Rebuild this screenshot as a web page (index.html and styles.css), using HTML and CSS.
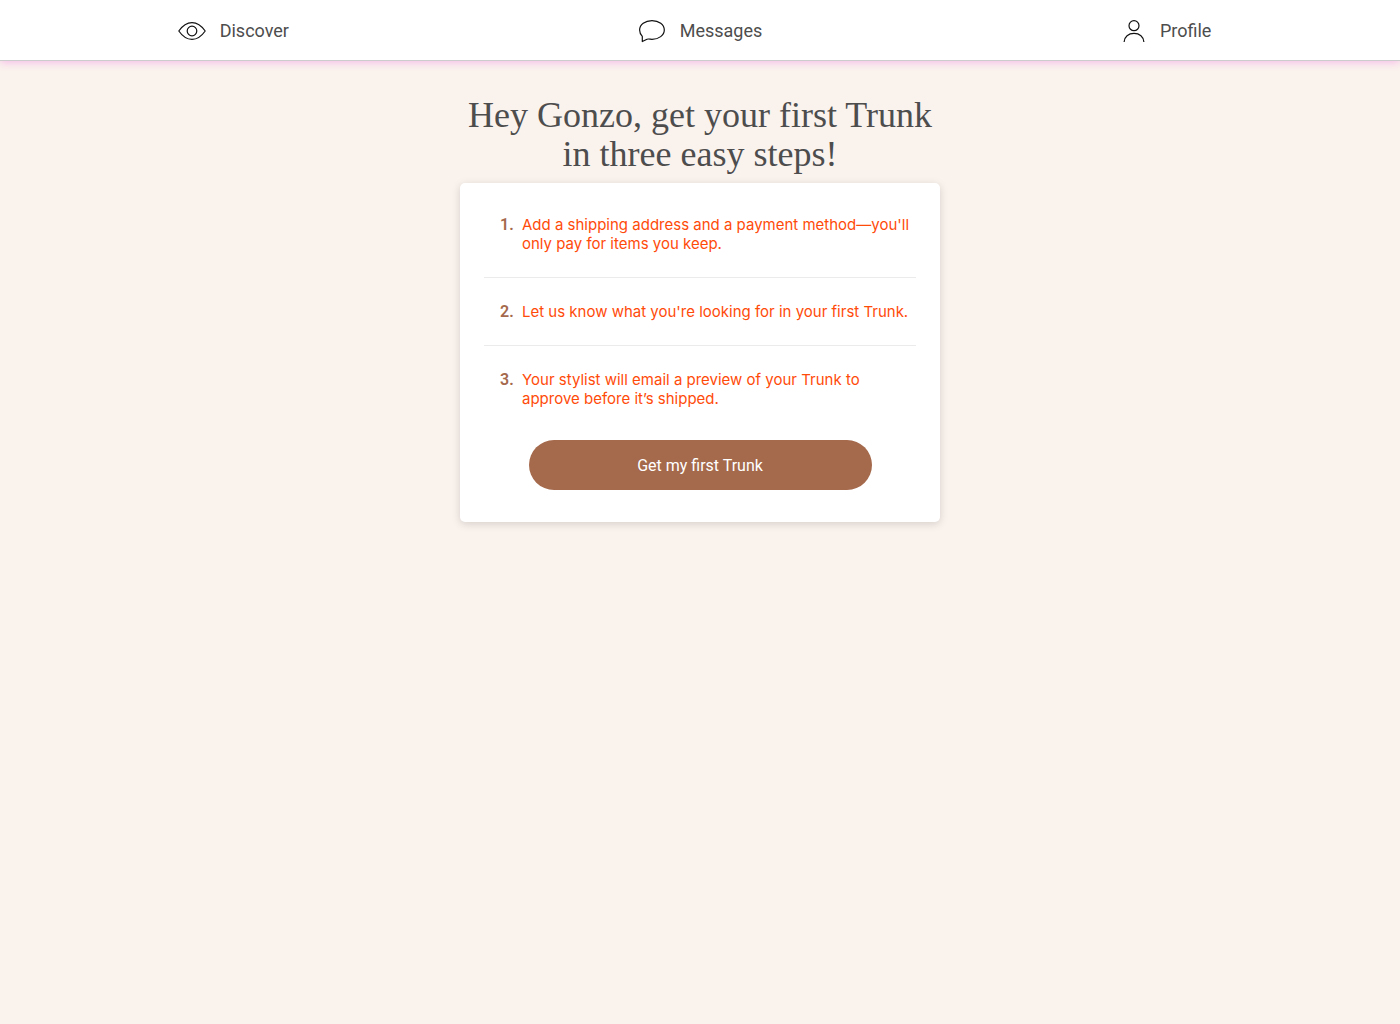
FILE: index.html
```html
<!DOCTYPE html>
<html lang="en">
<head>
  <meta charset="utf-8">
  <meta name="viewport" content="width=device-width, initial-scale=1">
  <title>Get your first Trunk</title>
  <link rel="stylesheet" href="styles.css">
</head>
<body>
  <header class="site-header">
    <nav class="nav" aria-label="Main">
      <a class="nav-link" href="#discover">
        <svg class="nav-icon" width="28" height="24" viewBox="0 0 28 24" aria-hidden="true">
          <path d="M0.8 12C4.3 7 8.6 3.6 14 3.6S23.700 7 27.200 12C23.700 17 19.400 20.400 14 20.400S4.300 17 0.800 12Z"/>
          <circle cx="14" cy="12" r="4.800"/>
        </svg>
        <span>Discover</span>
      </a>
      <a class="nav-link" href="#messages">
        <svg class="nav-icon" width="28" height="24" viewBox="0 0 28 24" aria-hidden="true">
          <path d="M4.300 22.500V17.300C2.700 15.600 1.600 13.500 1.600 11C1.600 5.600 7.100 1.600 14 1.600S26.300 5.600 26.300 11C26.300 16.300 20.800 20.300 14 20.300C12.300 20.300 10.500 19.700 9 20.200Z"/>
        </svg>
        <span>Messages</span>
      </a>
      <a class="nav-link" href="#profile">
        <svg class="nav-icon" width="24" height="24" viewBox="0 0 24 24" aria-hidden="true">
          <circle cx="12" cy="6.700" r="5"/>
          <path d="M2.100 23C2.300 17.800 6.500 14.400 12 14.400S21.700 17.800 21.900 23"/>
        </svg>
        <span>Profile</span>
      </a>
    </nav>
  </header>

  <main class="onboarding">
    <h1 class="title">Hey Gonzo, get your first Trunk in three easy steps!</h1>
    <section class="card">
      <ol class="steps">
        <li class="step">Add a shipping address and a payment method—you'll only pay for items you keep.</li>
        <li class="step">Let us know what you're looking for in your first Trunk.</li>
        <li class="step">Your stylist will email a preview of your Trunk to approve before it’s shipped.</li>
      </ol>
      <button class="cta" type="button">Get my first Trunk</button>
    </section>
  </main>
</body>
</html>
```
FILE: styles.css
```css
*,
*::before {
  box-sizing: border-box;
}

body {
  margin: 0;
  min-height: 100vh;
  background: #faf2ed;
  color: #4d4d4d;
  font-family: Roboto, "Liberation Sans", sans-serif;
}

.site-header {
  background: #fff;
  border-bottom: 1px solid #ccc;
  box-shadow: 0 1px 8px #f5b5e8;
}

.nav {
  display: grid;
  grid-template-columns: repeat(3, 1fr);
}

.nav-link {
  display: flex;
  align-items: center;
  justify-content: center;
  gap: 14px;
  height: 60px;
  padding-top: 2px;
  color: inherit;
  font-size: 18px;
  line-height: 24px;
  text-decoration: none;
}

.nav-icon {
  fill: none;
  stroke: #111;
  stroke-width: 1.2;
  stroke-linejoin: round;
}

.onboarding {
  max-width: 480px;
  margin: 0 auto;
  padding: 35px 0 48px;
}

.title {
  margin: 0 0 9px;
  font-family: "Liberation Serif", serif;
  font-size: 36px;
  font-weight: 400;
  line-height: 39px;
  text-align: center;
}

.card {
  padding: 8px 24px 32px;
  background: #fff;
  border-radius: 5px;
  box-shadow: 0 2px 8px rgba(0, 0, 0, 0.15);
}

.steps {
  margin: 0 0 8px;
  padding: 0;
  list-style: none;
  counter-reset: step;
}

.step {
  display: grid;
  grid-template-columns: 14px 1fr;
  gap: 8px;
  padding: 24px 0 24px 16px;
  color: #ff4b0a;
  font-family: Inter, "Liberation Sans", sans-serif;
  font-size: 15px;
  font-weight: 400;
  line-height: 19px;
  counter-increment: step;
}

.step + .step {
  border-top: 1px solid #ebebeb;
}

.step::before {
  content: counter(step) ".";
  color: #a5694c;
  font-family: Roboto, "Liberation Sans", sans-serif;
  font-size: 16px;
  font-weight: 600;
}

.cta {
  display: block;
  width: 100%;
  max-width: 343px;
  height: 50px;
  margin: 0 auto;
  border: 0;
  border-radius: 25px;
  background: #a5694c;
  color: #fff;
  font-family: inherit;
  font-size: 16px;
  cursor: pointer;
}
```
